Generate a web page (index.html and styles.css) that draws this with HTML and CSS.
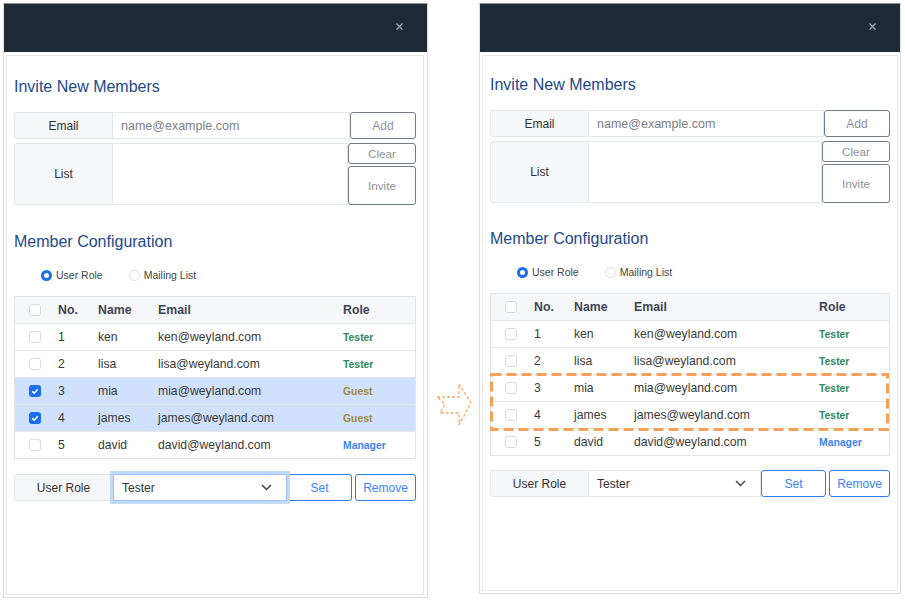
FILE: index.html
```html
<!DOCTYPE html>
<html lang="en">
<head>
  <meta charset="UTF-8" />
  <meta name="viewport" content="width=device-width, initial-scale=1.0"/>
  <title>Member Settings</title>
  <link rel="stylesheet" href="styles.css">
</head>
<body>
  <!-- before: two guests selected, role picker focused -->
  <div class="panel">
    <div class="panel-head">
      <svg class="close" width="7" height="7" viewBox="0 0 7 7"><path d="M0.5 0.5 L6.5 6.5 M6.5 0.5 L0.5 6.5"/></svg>
    </div>
    <div class="panel-body">
      <h2 class="section-title">Invite New Members</h2>
      <div class="field-row">
        <label class="field-label">Email</label>
        <input class="field-input" type="text" placeholder="name@example.com">
        <button class="btn btn-gray btn-add">Add</button>
      </div>
      <div class="field-row field-row-tall">
        <label class="field-label">List</label>
        <textarea class="field-input"></textarea>
        <div class="btn-stack">
          <button class="btn btn-gray btn-clear">Clear</button>
          <button class="btn btn-gray btn-invite">Invite</button>
        </div>
      </div>

      <h2 class="section-title section-gap">Member Configuration</h2>
      <div class="radios">
        <span class="radio-item"><span class="radio is-on"></span>User Role</span>
        <span class="radio-item"><span class="radio"></span>Mailing List</span>
      </div>

      <div class="members">
        <div class="members-row members-head">
          <span class="cell-check"><span class="check"></span></span>
          <span>No.</span><span>Name</span><span>Email</span><span>Role</span>
        </div>
        <div class="members-row">
          <span class="cell-check"><span class="check"></span></span>
          <span>1</span><span>ken</span><span>ken@weyland.com</span><span class="role role-tester">Tester</span>
        </div>
        <div class="members-row">
          <span class="cell-check"><span class="check"></span></span>
          <span>2</span><span>lisa</span><span>lisa@weyland.com</span><span class="role role-tester">Tester</span>
        </div>
        <div class="members-row is-selected">
          <span class="cell-check"><span class="check is-on"><svg width="12" height="12" viewBox="0 0 12 12"><path d="M3.2 6.3 L5.2 8.2 L8.8 4.2"/></svg></span></span>
          <span>3</span><span>mia</span><span>mia@weyland.com</span><span class="role role-guest">Guest</span>
        </div>
        <div class="members-row is-selected">
          <span class="cell-check"><span class="check is-on"><svg width="12" height="12" viewBox="0 0 12 12"><path d="M3.2 6.3 L5.2 8.2 L8.8 4.2"/></svg></span></span>
          <span>4</span><span>james</span><span>james@weyland.com</span><span class="role role-guest">Guest</span>
        </div>
        <div class="members-row">
          <span class="cell-check"><span class="check"></span></span>
          <span>5</span><span>david</span><span>david@weyland.com</span><span class="role role-manager">Manager</span>
        </div>
      </div>

      <div class="field-row role-row">
        <label class="field-label">User Role</label>
        <div class="select is-focus">Tester
          <svg width="11" height="7" viewBox="0 0 11 7"><path d="M1 1 L5.5 5.5 L10 1"/></svg>
        </div>
        <button class="btn btn-blue btn-set">Set</button>
        <button class="btn btn-blue btn-remove">Remove</button>
      </div>
    </div>
  </div>

  <div class="arrow-col">
    <svg width="38" height="44" viewBox="0 0 38 44">
      <path class="arrow" d="M2 15 L24 15 L24 2 L36 21 L24 43 L24 31 L5 31 L10 22 Z"/>
    </svg>
  </div>

  <!-- after: role set to Tester -->
  <div class="panel panel-after">
    <div class="panel-head">
      <svg class="close" width="7" height="7" viewBox="0 0 7 7"><path d="M0.5 0.5 L6.5 6.5 M6.5 0.5 L0.5 6.5"/></svg>
    </div>
    <div class="panel-body">
      <h2 class="section-title">Invite New Members</h2>
      <div class="field-row">
        <label class="field-label">Email</label>
        <input class="field-input" type="text" placeholder="name@example.com">
        <button class="btn btn-gray btn-add">Add</button>
      </div>
      <div class="field-row field-row-tall">
        <label class="field-label">List</label>
        <textarea class="field-input"></textarea>
        <div class="btn-stack">
          <button class="btn btn-gray btn-clear">Clear</button>
          <button class="btn btn-gray btn-invite">Invite</button>
        </div>
      </div>

      <h2 class="section-title section-gap">Member Configuration</h2>
      <div class="radios">
        <span class="radio-item"><span class="radio is-on"></span>User Role</span>
        <span class="radio-item"><span class="radio"></span>Mailing List</span>
      </div>

      <div class="members">
        <div class="members-row members-head">
          <span class="cell-check"><span class="check"></span></span>
          <span>No.</span><span>Name</span><span>Email</span><span>Role</span>
        </div>
        <div class="members-row">
          <span class="cell-check"><span class="check"></span></span>
          <span>1</span><span>ken</span><span>ken@weyland.com</span><span class="role role-tester">Tester</span>
        </div>
        <div class="members-row">
          <span class="cell-check"><span class="check"></span></span>
          <span>2</span><span>lisa</span><span>lisa@weyland.com</span><span class="role role-tester">Tester</span>
        </div>
        <div class="row-group">
          <div class="members-row">
            <span class="cell-check"><span class="check"></span></span>
            <span>3</span><span>mia</span><span>mia@weyland.com</span><span class="role role-tester">Tester</span>
          </div>
          <div class="members-row">
            <span class="cell-check"><span class="check"></span></span>
            <span>4</span><span>james</span><span>james@weyland.com</span><span class="role role-tester">Tester</span>
          </div>
          <svg class="highlight" width="399" height="58" viewBox="0 0 399 58">
            <rect x="1.5" y="1.5" width="396" height="55"/>
          </svg>
        </div>
        <div class="members-row">
          <span class="cell-check"><span class="check"></span></span>
          <span>5</span><span>david</span><span>david@weyland.com</span><span class="role role-manager">Manager</span>
        </div>
      </div>

      <div class="field-row role-row">
        <label class="field-label">User Role</label>
        <div class="select">Tester
          <svg width="11" height="7" viewBox="0 0 11 7"><path d="M1 1 L5.5 5.5 L10 1"/></svg>
        </div>
        <button class="btn btn-blue btn-set">Set</button>
        <button class="btn btn-blue btn-remove">Remove</button>
      </div>
    </div>
  </div>
</body>
</html>
```

FILE: styles.css
```css
body {
  margin: 0;
  padding: 3px 0 0 3px;
  display: flex;
  align-items: flex-start;
  background: #fff;
  font-family: "Liberation Sans", Arial, sans-serif;
  color: #333;
}
.panel {
  width: 425px;
  height: 595px;
  box-sizing: border-box;
  border: 1px solid #dcdcdc;
  border-top-color: #8a9098;
  display: flex;
  flex-direction: column;
}
.panel-after {
  width: 422px;
  height: 591px;
}
.panel-head {
  height: 48px;
  background: #1e2a36;
  display: flex;
  justify-content: flex-end;
  align-items: flex-start;
  padding: 19px 24px 0 0;
  box-sizing: border-box;
}
.close path {
  stroke: #a3aab3;
  stroke-width: 1.2;
}
.panel-body {
  flex: 1;
  margin: 3px 3px 2px 2px;
  border: 1px solid #e6e6e6;
  padding: 21px 7px 0;
}
.panel-after .panel-body {
  margin-right: 2px;
  padding-top: 19px;
}
.section-title {
  margin: 0;
  font-size: 16px;
  line-height: 20px;
  font-weight: normal;
  color: #22498c;
}
.section-gap {
  margin-top: 27px;
}
.panel-after .section-gap {
  margin-top: 26px;
}

.field-row {
  display: flex;
  height: 27px;
  margin-top: 15px;
}
.field-row-tall {
  height: 62px;
  margin-top: 4px;
}
.panel-after .role-row {
  margin-top: 14px;
}
.field-label {
  width: 99px;
  flex: none;
  box-sizing: border-box;
  display: flex;
  align-items: center;
  justify-content: center;
  background: #f6f7f9;
  border: 1px solid #e4e7eb;
  border-radius: 3px 0 0 3px;
  font-size: 12px;
  color: #333;
}
.field-input {
  flex: 1;
  min-width: 0;
  margin: 0;
  box-sizing: border-box;
  border: 1px solid #e4e7eb;
  border-left: none;
  padding: 0 0 0 8px;
  font-family: inherit;
  font-size: 12.5px;
  color: #333;
  outline: none;
  resize: none;
}
.field-input::placeholder {
  color: #7b7f85;
}

.btn {
  box-sizing: border-box;
  margin: 0;
  padding: 0;
  background: #fff;
  border-radius: 3px;
  font-family: inherit;
  font-size: 12px;
  cursor: pointer;
}
.btn-gray {
  border: 1px solid #737b84;
  color: #8c9198;
}
.btn-add {
  width: 66px;
}
.btn-stack {
  width: 68px;
  display: flex;
  flex-direction: column;
  gap: 2px;
}
.btn-clear {
  height: 21px;
  font-size: 11.7px;
}
.btn-invite {
  flex: 1;
  font-size: 11.7px;
}
.btn-blue {
  border: 1px solid #2a7bf4;
  color: #3a86f6;
}
.btn-set {
  width: 65px;
}
.btn-remove {
  width: 61px;
  margin-left: 3px;
}

.radios {
  display: flex;
  gap: 26px;
  height: 16px;
  margin-top: 15px;
  padding-left: 27px;
  font-size: 10.5px;
  color: #444;
}
.radio-item {
  display: flex;
  align-items: center;
  gap: 4px;
}
.radio {
  width: 11px;
  height: 11px;
  box-sizing: border-box;
  border: 1px solid #dde0e4;
  border-radius: 50%;
}
.radio.is-on {
  border: 3.5px solid #1a6ee8;
}

.members {
  margin-top: 13px;
  border: 1px solid #e0e3e7;
  font-size: 12.2px;
  color: #3a3a3a;
}
.members-row {
  display: grid;
  grid-template-columns: 43px 40px 60px 185px 1fr;
  align-items: center;
  height: 26px;
  border-bottom: 1px solid #e4e6ea;
}
.members > .members-row:last-child {
  border-bottom: none;
}
.members-head {
  background: #f6f7f9;
  font-weight: bold;
  color: #3e4457;
  font-size: 12.3px;
}
.members-row.is-selected {
  background: #cfe1fc;
}
.cell-check {
  display: flex;
  padding-left: 14px;
}
.check {
  width: 12px;
  height: 12px;
  box-sizing: border-box;
  border: 1px solid #d8dbdf;
  border-radius: 3px;
  background: #fff;
}
.check.is-on {
  border: none;
  background: #1a6ef0;
}
.check svg {
  display: block;
}
.check path {
  fill: none;
  stroke: #fff;
  stroke-width: 1.6;
}
.role {
  font-weight: bold;
  font-size: 10.4px;
}
.role-tester { color: #2e8a5c; }
.role-guest { color: #a08a3c; }
.role-manager { color: #3b84f5; }

.row-group {
  position: relative;
}
.highlight {
  position: absolute;
  top: -2px;
  left: -1px;
  pointer-events: none;
}
.highlight rect {
  fill: none;
  stroke: #f5a15c;
  stroke-width: 3;
  stroke-dasharray: 10 5;
}

.select {
  flex: 1;
  box-sizing: border-box;
  display: flex;
  align-items: center;
  justify-content: space-between;
  padding: 0 14px 0 8px;
  border: 1px solid #e4e7eb;
  border-left: none;
  font-size: 12px;
  color: #333;
}
.select.is-focus {
  border: 1px solid #9cc0f7;
  box-shadow: 0 0 0 3px #c3d9f9;
  position: relative;
}
.select path {
  fill: none;
  stroke: #444;
  stroke-width: 1.5;
}

.arrow-col {
  width: 51px;
  flex: none;
  box-sizing: border-box;
  padding: 379px 0 0 7px;
}
.arrow-col svg {
  display: block;
}
.arrow {
  fill: none;
  stroke: #f5a862;
  stroke-width: 1.3;
  stroke-dasharray: 3 2;
}
```
